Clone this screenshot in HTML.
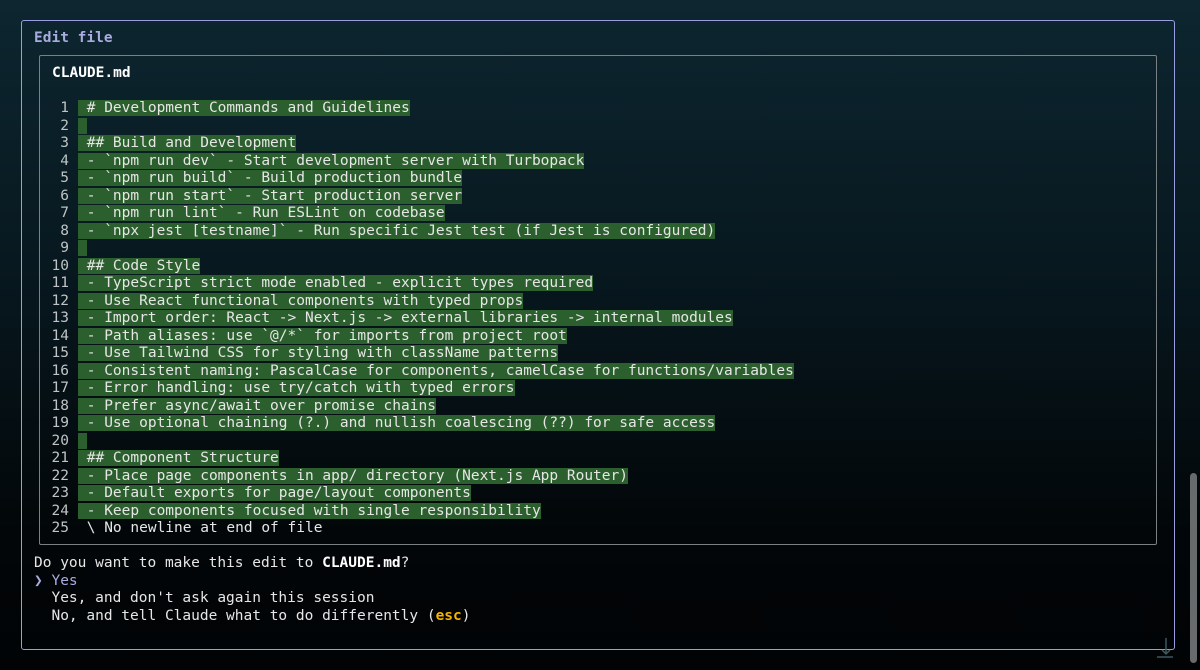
<!DOCTYPE html>
<html><head><style>
html,body{margin:0;padding:0;width:1200px;height:670px;overflow:hidden;background:linear-gradient(#0d2630 0%,#07161d 45%,#020608 80%,#010305 100%);font-family:"DejaVu Sans Mono","Liberation Mono",monospace;font-size:14.5px;color:#e6e6e6}
.outer{position:absolute;left:21px;top:20px;width:1152px;height:628px;border:1px solid #9a9ee0;border-radius:3px}
.t{position:absolute;white-space:pre;line-height:17.5px}
.inner{position:absolute;left:39px;top:55px;width:1116px;height:488px;border:1px solid #7b8083;border-radius:2px}
.ln{position:absolute;left:40px;width:29px;text-align:right;white-space:pre;line-height:17.5px;color:#bfc3c5}
.code{position:absolute;left:78px;white-space:pre;line-height:17.5px}
.g{background:#2b5f2d}
.sb{position:absolute;left:1190px;top:473px;width:7px;height:190px;background:#686b6c;border-radius:4px}
</style></head><body>
<div class="outer"></div>
<div class="t" style="left:34px;top:30px;color:#a9acdf;font-weight:bold">Edit file</div>
<div class="inner"></div>
<div class="t" style="left:52px;top:65px;font-weight:bold;color:#fff">CLAUDE.md</div>
<div class="ln" style="top:100px">1
2
3
4
5
6
7
8
9
10
11
12
13
14
15
16
17
18
19
20
21
22
23
24
25</div>
<div class="code" style="top:100px"><span class="g"> # Development Commands and Guidelines</span>
<span class="g"> </span>
<span class="g"> ## Build and Development</span>
<span class="g"> - `npm run dev` - Start development server with Turbopack</span>
<span class="g"> - `npm run build` - Build production bundle</span>
<span class="g"> - `npm run start` - Start production server</span>
<span class="g"> - `npm run lint` - Run ESLint on codebase</span>
<span class="g"> - `npx jest [testname]` - Run specific Jest test (if Jest is configured)</span>
<span class="g"> </span>
<span class="g"> ## Code Style</span>
<span class="g"> - TypeScript strict mode enabled - explicit types required</span>
<span class="g"> - Use React functional components with typed props</span>
<span class="g"> - Import order: React -&gt; Next.js -&gt; external libraries -&gt; internal modules</span>
<span class="g"> - Path aliases: use `@/*` for imports from project root</span>
<span class="g"> - Use Tailwind CSS for styling with className patterns</span>
<span class="g"> - Consistent naming: PascalCase for components, camelCase for functions/variables</span>
<span class="g"> - Error handling: use try/catch with typed errors</span>
<span class="g"> - Prefer async/await over promise chains</span>
<span class="g"> - Use optional chaining (?.) and nullish coalescing (??) for safe access</span>
<span class="g"> </span>
<span class="g"> ## Component Structure</span>
<span class="g"> - Place page components in app/ directory (Next.js App Router)</span>
<span class="g"> - Default exports for page/layout components</span>
<span class="g"> - Keep components focused with single responsibility</span>
 \ No newline at end of file</div>
<div class="t" style="left:34px;top:555px">Do you want to make this edit to <b style="color:#fff">CLAUDE.md</b>?
<span style="color:#a9acdf">❯ Yes</span>
  Yes, and don't ask again this session
  No, and tell Claude what to do differently (<b style="color:#f5b400">esc</b>)</div>
<div class="sb"></div>
<svg style="position:absolute;left:1155px;top:636px" width="20" height="24"><path d="M11 2v16M7 14l4 4 4-4M2 21h16" stroke="#3a5a60" stroke-width="1.5" fill="none"/></svg>
</body></html>
